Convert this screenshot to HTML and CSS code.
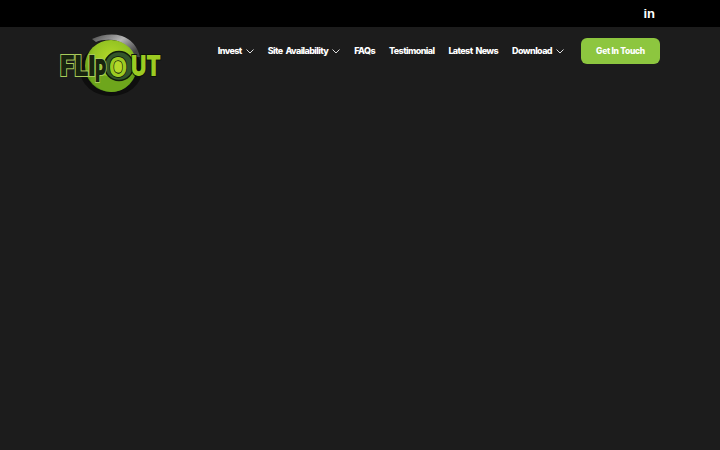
FILE: index.html
```html
<!DOCTYPE html>
<html lang="en">
<head>
<meta charset="utf-8">
<title>FlipOut</title>
<link rel="stylesheet" href="styles.css">
</head>
<body>
<div class="topbar">
  <a class="social" href="#">in</a>
</div>
<header class="header">
  <a class="logo" href="#" aria-label="FlipOut">
    <svg width="106" height="66" viewBox="0 0 106 66">
      <defs>
        <radialGradient id="disc" cx="50%" cy="35%" r="65%">
          <stop offset="0%" stop-color="#b4d82a"/>
          <stop offset="55%" stop-color="#93c322"/>
          <stop offset="100%" stop-color="#4c8a16"/>
        </radialGradient>
        <linearGradient id="ring" x1="0" y1="0" x2="1" y2="0.6">
          <stop offset="0%" stop-color="#4a4a4a"/>
          <stop offset="55%" stop-color="#b5b5b5"/>
          <stop offset="100%" stop-color="#444"/>
        </linearGradient>
      </defs>
      <ellipse cx="53" cy="39" rx="31" ry="26" fill="#0e0e0e"/>
      <path d="M34 8 Q50 1 64 5 Q78 10 82 26 L74 26 Q70 12 56 9 Q44 8 38 11 Z" fill="url(#ring)"/>
      <circle cx="53" cy="35" r="26" fill="url(#disc)"/>
      <path d="M32 49 Q44 41 58 47 Q70 51 76 46 Q68 61 53 61 Q40 60 32 49 Z" fill="#6ea61c"/>
      <circle cx="61" cy="35" r="14.5" fill="#33562a" stroke="#101c0b" stroke-width="1.5"/>
      <circle cx="61" cy="35" r="7" fill="#b4d82a"/>
      <text class="logo-flip" transform="translate(2 45) scale(.88 1)">FLI</text>
      <text class="logo-flip" transform="translate(37 51) scale(.62 1.12)">P</text>
      <text class="logo-o" transform="translate(51 46) scale(.78 1)">O</text>
      <text class="logo-out" transform="translate(73 45) scale(.76 1)">UT</text>
    </svg>
  </a>
  <nav class="nav">
    <a class="nav-item" href="#">Invest<svg class="chev" width="8" height="6" viewBox="0 0 8 6"><path d="M.5 1.500L4 5l3.500-3.500"/></svg></a>
    <a class="nav-item" href="#">Site Availability<svg class="chev" width="8" height="6" viewBox="0 0 8 6"><path d="M.5 1.500L4 5l3.500-3.500"/></svg></a>
    <a class="nav-item" href="#">FAQs</a>
    <a class="nav-item" href="#">Testimonial</a>
    <a class="nav-item" href="#">Latest News</a>
    <a class="nav-item" href="#">Download<svg class="chev" width="8" height="6" viewBox="0 0 8 6"><path d="M.5 1.500L4 5l3.500-3.500"/></svg></a>
    <a class="cta" href="#">Get In Touch</a>
  </nav>
</header>
</body>
</html>
```
FILE: styles.css
```css
* { box-sizing: border-box; }
html, body { margin: 0; height: 100%; }
body {
  background: #1c1c1c;
  color: #fff;
  font-family: "Inter", "Liberation Sans", sans-serif;
  overflow: hidden;
}
a { color: inherit; text-decoration: none; }
.topbar {
  height: 27px;
  background: #000;
  display: flex;
  justify-content: flex-end;
  align-items: center;
  padding-right: 65px;
}
.social {
  font: 700 13px/1 "Liberation Sans", sans-serif;
}
.header {
  display: flex;
  justify-content: space-between;
  align-items: flex-start;
  padding: 0 60px 0 58px;
}
.logo { display: block; margin-top: 4px; height: 66px; }
.logo svg { display: block; }
.logo-flip, .logo-out, .logo-o {
  font: 900 28px "Inter", "Liberation Sans", sans-serif;
  paint-order: stroke;
}
.logo-flip {
  fill: #18240f;
  stroke: #a8cc5a;
  stroke-width: 2px;
}
.logo-out {
  fill: #9ccb22;
  stroke: #0c1408;
  stroke-width: 2px;
}
.logo-o {
  font: 700 30px "Liberation Sans", sans-serif;
  fill: #9ccb22;
  stroke: #0c1408;
  stroke-width: 1.5px;
}
.nav {
  display: flex;
  align-items: center;
  margin-top: 10px;
  height: 27px;
}
.nav-item {
  display: flex;
  align-items: center;
  font-size: 9px;
  font-weight: 800;
  letter-spacing: -0.6px;
  word-spacing: 1.5px;
  margin-right: 14px;
  white-space: nowrap;
}
.chev {
  margin-left: 4px;
  fill: none;
  stroke: #ddd;
  stroke-width: 1;
}
.cta {
  margin-left: 3px;
  width: 79px;
  height: 26px;
  background: #8dc63f;
  border-radius: 6px;
  display: flex;
  align-items: center;
  justify-content: center;
  font-size: 8.5px;
  font-weight: 800;
  letter-spacing: -0.3px;
}
```
